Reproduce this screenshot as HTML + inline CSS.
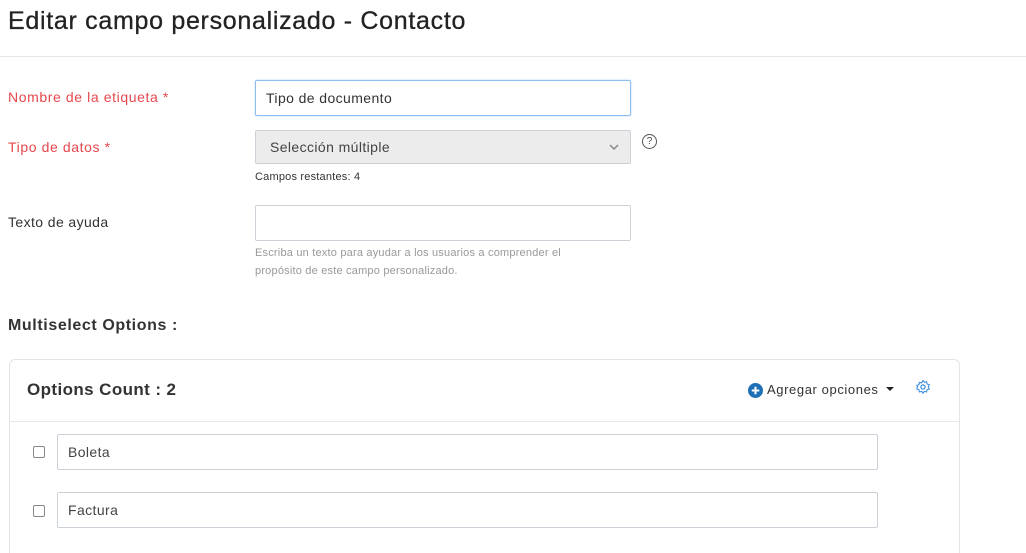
<!DOCTYPE html>
<html><head><meta charset="utf-8"><style>
html,body{margin:0;width:1026px;height:553px;overflow:hidden}
body{background:#fff;font-family:"Liberation Sans",sans-serif;color:#222;position:relative}
.a{position:absolute;white-space:nowrap}
.lbl{font-size:14px;color:#e5484d;letter-spacing:0.6px}
.in{position:absolute;box-sizing:border-box;border:1px solid #ccd1d7;border-radius:2px;background:#fff;font-size:14px;color:#333;padding-left:10px;display:flex;align-items:center;letter-spacing:0.4px}
.cb{position:absolute;width:12px;height:12px;border:1px solid #888;border-radius:2px;box-sizing:border-box}
</style></head><body>
<div class="a" style="left:8px;top:7px;font-size:25px;color:#222;letter-spacing:0.7px;-webkit-text-stroke:0.3px #222">Editar campo personalizado - Contacto</div>
<div class="a" style="left:0;top:56px;width:1026px;height:1px;background:#e6e6e6"></div>

<div class="a lbl" style="left:8px;top:89px">Nombre de la etiqueta *</div>
<div class="in" style="left:255px;top:80px;width:376px;height:36px;border-color:#8fbdf0;box-shadow:0 0 2px #bcd7f5">Tipo de documento</div>

<div class="a lbl" style="left:8px;top:139px">Tipo de datos *</div>
<div class="in" style="left:255px;top:130px;width:376px;height:34px;background:#ececec;color:#444;padding-left:14px">Selección múltiple</div>
<svg class="a" style="left:608px;top:142px" width="12" height="10" viewBox="0 0 12 10"><path d="M2 3l4 4 4-4" fill="none" stroke="#888" stroke-width="1.5"/></svg>
<div class="a" style="left:642px;top:134px;width:15px;height:15px;border:1px solid #555;border-radius:50%;box-sizing:border-box;font-size:10px;text-align:center;line-height:13px;color:#444">?</div>
<div class="a" style="left:255px;top:171px;font-size:11px;color:#333;letter-spacing:0.2px">Campos restantes: 4</div>

<div class="a" style="left:8px;top:214px;font-size:14px;color:#333;letter-spacing:0.4px">Texto de ayuda</div>
<div class="in" style="left:255px;top:205px;width:376px;height:36px"></div>
<div class="a" style="left:255px;top:244px;font-size:11px;color:#999;line-height:18px;letter-spacing:0.2px">Escriba un texto para ayudar a los usuarios a comprender el<br>propósito de este campo personalizado.</div>

<div class="a" style="left:8px;top:317px;font-size:16px;font-weight:bold;color:#333;letter-spacing:0.6px">Multiselect Options :</div>
<div class="a" style="left:9px;top:359px;width:951px;height:194px;border:1px solid #e2e5e8;border-bottom:none;border-radius:6px 6px 0 0;box-sizing:border-box"></div>
<div class="a" style="left:10px;top:421px;width:949px;height:1px;background:#e6e8ea"></div>
<div class="a" style="left:27px;top:380px;font-size:17px;font-weight:bold;color:#333;letter-spacing:0.4px">Options Count : 2</div>
<svg class="a" style="left:748px;top:383px" width="15" height="15" viewBox="0 0 16 16"><circle cx="8" cy="8" r="8" fill="#1f6fb5"/><path d="M8 4v8M4 8h8" stroke="#fff" stroke-width="2.2"/></svg>
<div class="a" style="left:767px;top:382px;font-size:13px;color:#333;letter-spacing:0.6px">Agregar opciones</div>
<svg class="a" style="left:886px;top:387px" width="8" height="5"><path d="M0 0h8L4 4z" fill="#222"/></svg>
<svg class="a" style="left:915px;top:379px" width="16" height="16" viewBox="0 0 24 24"><circle cx="12" cy="12" r="3.2" fill="none" stroke="#3b8de0" stroke-width="1.8"/><path d="M12 2l2 3 3.5-1 .5 3.5 3.5 1-1.5 3.5 1.5 3-3.5 1-.5 3.5-3.5-1-2 3-2-3-3.5 1-.5-3.5-3.5-1 1.5-3.5L2.5 9.5l3.5-1L6.5 5l3.5 1z" fill="none" stroke="#3b8de0" stroke-width="1.6" stroke-linejoin="round"/></svg>

<div class="cb" style="left:33px;top:446px"></div>
<div class="in" style="left:57px;top:434px;width:821px;height:36px;color:#444">Boleta</div>
<div class="cb" style="left:33px;top:505px"></div>
<div class="in" style="left:57px;top:492px;width:821px;height:36px;color:#444">Factura</div>
</body></html>
